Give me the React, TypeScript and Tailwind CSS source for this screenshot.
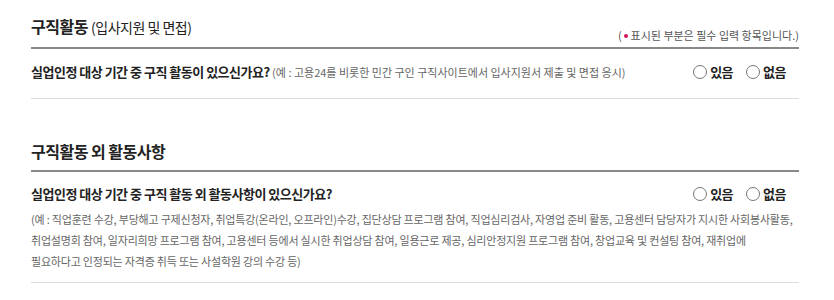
import React from "react";

const font = { fontFamily: '"Noto Sans CJK KR", "Noto Sans", sans-serif' };

function Radio({ label }: { label: string }) {
  return (
    <label className="inline-flex items-center gap-[3px] cursor-pointer">
      <span className="h-[14px] w-[14px] rounded-full border border-[#767676] bg-white" />
      <span className="text-[13px] font-bold text-[#222] tracking-[-0.5px]">{label}</span>
    </label>
  );
}

function Choice() {
  return (
    <div className="flex items-center gap-[13px] flex-shrink-0">
      <Radio label="있음" />
      <Radio label="없음" />
    </div>
  );
}

export default function App() {
  return (
    <div className="bg-white w-[834px] h-[300px] pl-[31px] pr-[35px] pt-[14px] text-[#222]" style={font}>
      {/* 구직활동 */}
      <section>
        <div className="flex items-end justify-between border-b-2 border-[#888] pb-[8px]">
          <h2 className="text-[16px] font-bold tracking-[-0.5px] leading-[24px]">
            구직활동 <span className="text-[14px] font-normal">(입사지원 및 면접)</span>
          </h2>
          <p className="text-[11px] text-[#555] leading-[14px] -mb-[3px]">
            ( <span className="inline-block h-[4px] w-[4px] rounded-full bg-[#d4145a] align-middle mb-[2px]" /> 표시된 부분은 필수 입력 항목입니다.)
          </p>
        </div>
        <div className="flex items-center justify-between border-b border-[#ddd] h-[50px] pb-[4px] pr-[13px]">
          <p className="text-[13px] font-bold tracking-[-0.5px]">
            실업인정 대상 기간 중 구직 활동이 있으신가요?{" "}
            <span className="text-[11px] font-normal text-[#666] tracking-normal">
              (예 : 고용24를 비롯한 민간 구인 구직사이트에서 입사지원서 제출 및 면접 응시)
            </span>
          </p>
          <Choice />
        </div>
      </section>

      {/* 구직활동 외 활동사항 */}
      <section className="mt-[40px]">
        <div className="border-b-2 border-[#888] pb-[7px]">
          <h2 className="text-[16px] font-bold tracking-[-0.5px] leading-[24px]">구직활동 외 활동사항</h2>
        </div>
        <div className="border-b border-[#ddd] pt-[12px] pb-[10px]">
          <div className="flex items-center justify-between pr-[13px]">
            <p className="text-[13px] font-bold tracking-[-0.5px]">
              실업인정 대상 기간 중 구직 활동 외 활동사항이 있으신가요?
            </p>
            <Choice />
          </div>
          <p className="mt-[5px] text-[11px] text-[#666] leading-[21px] tracking-[-0.2px] whitespace-nowrap">
            (예 : 직업훈련 수강, 부당해고 구제신청자, 취업특강(온라인, 오프라인)수강, 집단상담 프로그램 참여, 직업심리검사, 자영업 준비 활동, 고용센터 담당자가 지시한 사회봉사활동,
            <br />
            취업설명회 참여, 일자리희망 프로그램 참여, 고용센터 등에서 실시한 취업상담 참여, 일용근로 제공, 심리안정지원 프로그램 참여, 창업교육 및 컨설팅 참여, 재취업에
            <br />
            필요하다고 인정되는 자격증 취득 또는 사설학원 강의 수강 등)
          </p>
        </div>
      </section>
    </div>
  );
}
